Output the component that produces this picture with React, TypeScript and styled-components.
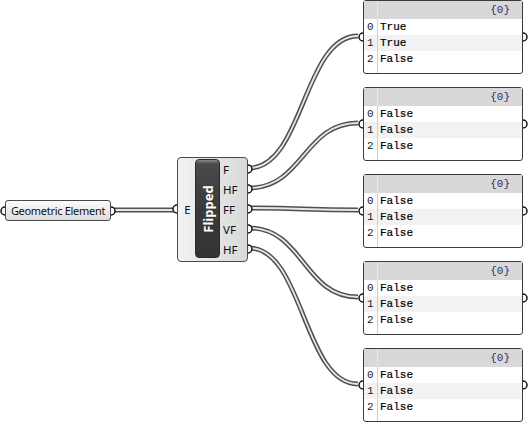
import styled, { createGlobalStyle } from "styled-components"

const GlobalStyle = createGlobalStyle`
    html, body {
        margin: 0;
        padding: 0;
        background: #ffffff;
    }
`

const Canvas = styled.div`
    position: relative;
    width: 529px;
    height: 423px;
    overflow: hidden;
    background: #ffffff;
    font-family: "Noto Sans", "Open Sans", sans-serif;
`

const WireLayer = styled.svg`
    position: absolute;
    left: 0;
    top: 0;
    width: 529px;
    height: 423px;
`

const GripSvg = styled.svg<{ $side: "in" | "out" }>`
    position: absolute;
    top: calc(50% - 5px);
    ${p => (p.$side === "in" ? "left: -7px;" : "right: -7px;")}
    width: 6px;
    height: 10px;
    overflow: visible;
`

const Grip = ({ side }: { side: "in" | "out" }) => (
    <GripSvg $side={side} viewBox="0 0 6 10">
        <path
            d={side === "in" ? "M6 1 A4 4 0 0 0 6 9" : "M0 1 A4 4 0 0 1 0 9"}
            fill="#ffffff"
            stroke="#111111"
            strokeWidth="1.5"
        />
    </GripSvg>
)

// floating parameter node
const ParamNode = styled.div<{ $x: number; $y: number }>`
    position: absolute;
    left: ${p => p.$x}px;
    top: ${p => p.$y}px;
    width: 106px;
    height: 21px;
    box-sizing: border-box;
    border: 1px solid #4a4a4a;
    border-radius: 3px;
    background: linear-gradient(#fbfbfb, #dcdcdc);
    display: flex;
    align-items: center;
    justify-content: center;
    font-size: 11px;
    letter-spacing: -0.3px;
    color: #111;
`

// component node
const ComponentNode = styled.div<{ $x: number; $y: number }>`
    position: absolute;
    left: ${p => p.$x}px;
    top: ${p => p.$y}px;
    width: 71px;
    height: 105px;
    box-sizing: border-box;
    border: 1px solid #4a4a4a;
    border-radius: 4px;
    background: linear-gradient(to right, #f2f2f2, #d9d9d9);
    display: flex;
    padding: 1px 0 2px 0;
`

const InputCol = styled.div`
    width: 17px;
    display: flex;
    flex-direction: column;
    justify-content: center;
`

const OutputCol = styled.div`
    flex: 1;
    display: flex;
    flex-direction: column;
`

const PortRow = styled.div<{ $side: "in" | "out" }>`
    position: relative;
    height: 20px;
    display: flex;
    align-items: center;
    justify-content: ${p => (p.$side === "in" ? "center" : "flex-start")};
    padding-left: ${p => (p.$side === "in" ? "2px" : "3px")};
    font-size: 11.5px;
    color: #0d0d1a;
`

const Capsule = styled.div`
    width: 25px;
    height: 99px;
    box-sizing: border-box;
    border: 1px solid #2a2a2a;
    border-radius: 4px;
    background: linear-gradient(#8a8a8a 0px, #4a4a4a 4px, #3a3a3a 50%, #333 100%);
    display: flex;
    align-items: center;
    justify-content: center;
`

const CapsuleLabel = styled.span`
    transform: rotate(-90deg);
    white-space: nowrap;
    color: #ffffff;
    font-weight: 700;
    font-size: 13px;
`

// text panel
const Panel = styled.div<{ $y: number }>`
    position: absolute;
    left: 363px;
    top: ${p => p.$y}px;
    width: 160px;
    height: 74px;
    box-sizing: border-box;
    border: 1px solid #3a3a3a;
    border-radius: 3px;
    background: #ffffff;
    display: flex;
    flex-direction: column;
    font-family: "Liberation Mono", "Courier New", monospace;
    font-size: 11px;
    color: #000;
`

const PanelHeader = styled.div`
    height: 18px;
    display: grid;
    grid-template-columns: 14px 1fr;
    background: #d8d8d8;
`

const HeaderTag = styled.span`
    justify-self: end;
    align-self: center;
    padding-right: 12px;
    color: #2f2f6b;
`

const PanelRow = styled.div<{ $alt: boolean }>`
    height: 16px;
    display: grid;
    grid-template-columns: 14px 1fr;
    align-items: center;
    background: ${p => (p.$alt ? "#f2f2f2" : "#ffffff")};
`

const IndexCell = styled.span<{ $light?: boolean }>`
    height: 100%;
    display: flex;
    align-items: center;
    padding-left: 3px;
    border-right: 1px solid ${p => (p.$light ? "#e8e8e8" : "#cfcfcf")};
    color: #1a1a1a;
`

const ValueCell = styled.span`
    padding-left: 2px;
    -webkit-text-stroke: 0.2px #000;
`

const PanelFiller = styled.div`
    flex: 1;
    display: grid;
    grid-template-columns: 14px 1fr;
`

const panels = [
    { y: 0, values: ["True", "True", "False"] },
    { y: 87, values: ["False", "False", "False"] },
    { y: 174, values: ["False", "False", "False"] },
    { y: 261, values: ["False", "False", "False"] },
    { y: 348, values: ["False", "False", "False"] },
]

const outputs = ["F", "HF", "FF", "VF", "HF"]

const COMP = { x: 177, y: 157 }

const wirePath = (x1: number, y1: number, x2: number, y2: number) => {
    const d = Math.abs(x2 - x1) * 0.5
    return `M${x1} ${y1} C${x1 + d} ${y1} ${x2 - d} ${y2} ${x2} ${y2}`
}

const Wire = ({ d }: { d: string }) => (
    <g fill="none">
        <path d={d} stroke="#505050" strokeWidth="4.8" />
        <path d={d} stroke="#e6e6e6" strokeWidth="1.8" />
    </g>
)

const App = () => {
    const wires = [
        wirePath(111, 210, 176, 210),
        ...panels.map((p, i) => wirePath(249, COMP.y + 11 + i * 20, 358, p.y + 36)),
    ]
    return (
        <>
            <GlobalStyle />
            <Canvas>
                <WireLayer viewBox="0 0 529 423">
                    {wires.map((d, i) => (
                        <Wire key={i} d={d} />
                    ))}
                </WireLayer>

                <ParamNode $x={5} $y={200}>
                    <Grip side="in" />
                    Geometric Element
                    <Grip side="out" />
                </ParamNode>

                <ComponentNode $x={COMP.x} $y={COMP.y}>
                    <InputCol>
                        <PortRow $side="in">
                            <Grip side="in" />
                            E
                        </PortRow>
                    </InputCol>
                    <Capsule>
                        <CapsuleLabel>Flipped</CapsuleLabel>
                    </Capsule>
                    <OutputCol>
                        {outputs.map((o, i) => (
                            <PortRow key={i} $side="out">
                                {o}
                                <Grip side="out" />
                            </PortRow>
                        ))}
                    </OutputCol>
                </ComponentNode>

                {panels.map((p, i) => (
                    <Panel key={i} $y={p.y}>
                        <Grip side="in" />
                        <Grip side="out" />
                        <PanelHeader>
                            <IndexCell $light />
                            <HeaderTag>{"{0}"}</HeaderTag>
                        </PanelHeader>
                        {p.values.map((v, j) => (
                            <PanelRow key={j} $alt={j === 1}>
                                <IndexCell>{j}</IndexCell>
                                <ValueCell>{v}</ValueCell>
                            </PanelRow>
                        ))}
                        <PanelFiller>
                            <IndexCell />
                        </PanelFiller>
                    </Panel>
                ))}
            </Canvas>
        </>
    )
}

export default App
